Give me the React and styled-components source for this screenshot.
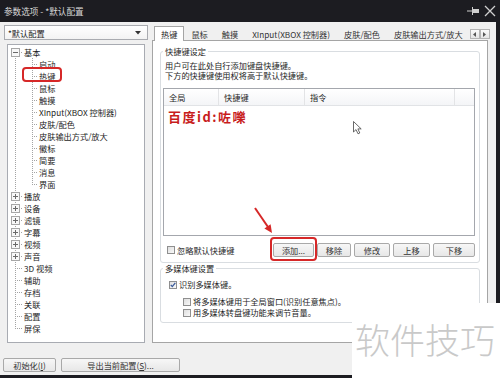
import React from "react";
import styled, { createGlobalStyle } from "styled-components";

const FONT = `"Noto Sans CJK SC", "Noto Sans", sans-serif`;
const DOT = "#a4a4a4";

const GlobalStyle = createGlobalStyle`
  html, body { margin: 0; padding: 0; background: #1c1c21; }
  * { box-sizing: border-box; }
`;

const Screen = styled.div`
  position: relative;
  width: 500px;
  height: 378px;
  overflow: hidden;
  background: #1c1c21;
  display: flex;
  flex-direction: column;
  font-family: ${FONT};
  font-size: 8.2px;
  color: #1e1e1e;
`;

const TitleBar = styled.div`
  height: 22px;
  flex: none;
  display: flex;
  align-items: center;
  padding: 0 4px;
  color: #d8d8d8;
  font-size: 8.6px;
`;

const TitleText = styled.span`
  flex: 1;
`;

const TitleIcons = styled.div`
  display: flex;
  align-items: center;
  gap: 4px;
`;

const Window = styled.div`
  width: 496px;
  height: 353px;
  background: #f0f0f0;
  display: flex;
  flex-direction: column;
`;

const Main = styled.div`
  height: 321px;
  display: flex;
  padding: 3px 0 0 4px;
`;

const LeftCol = styled.div`
  width: 144px;
  display: flex;
  flex-direction: column;
`;

const Combo = styled.div`
  height: 15px;
  flex: none;
  border: 1px solid #a9abb0;
  background: linear-gradient(#ffffff, #f3f3f3);
  display: flex;
  align-items: center;
  justify-content: space-between;
  padding: 0 6px 0 3px;
`;

const Tree = styled.div`
  position: relative;
  flex: 1;
  margin: 4px 3px 0 3px;
  background: #fff;
  border: 1px solid #a8abb2;
  padding-top: 1px;
`;

const Row = styled.div`
  height: 12px;
  display: flex;
  white-space: nowrap;
`;

const vLine = (c, pos, size) =>
  `repeating-linear-gradient(to bottom, ${DOT} 0 1px, transparent 1px 2px) ${c}px ${pos} / 1px ${size} no-repeat`;
const hLine = (c) =>
  `repeating-linear-gradient(to right, ${DOT} 0 1px, transparent 1px 2px) ${c}px 6px / calc(100% - ${c}px) 1px no-repeat`;

const gutterLines = ({ $c, $v, $h }) => {
  const out = [];
  if ($v === "full") out.push(vLine($c, "0", "100%"));
  if ($v === "top") out.push(vLine($c, "0", "7px"));
  if ($v === "bottom") out.push(vLine($c, "6px", "6px"));
  if ($h) out.push(hLine($c));
  return out.length ? out.join(", ") : "none";
};

const Gutter = styled.span`
  flex: none;
  width: ${(p) => p.$w}px;
  display: flex;
  justify-content: center;
  padding-top: 2px;
  background: ${gutterLines};
`;

const Label = styled.span`
  margin-left: 1px;
  line-height: 12px;
`;

const Ring = styled.div`
  position: absolute;
  left: ${(p) => p.$x}px;
  top: ${(p) => p.$y}px;
  width: ${(p) => p.$w}px;
  height: ${(p) => p.$h}px;
  border: 2px solid #d62828;
  border-radius: 4px;
`;

const RightCol = styled.div`
  width: 336px;
  margin-left: 4px;
  display: flex;
  flex-direction: column;
`;

const TabStrip = styled.div`
  height: 15px;
  flex: none;
  display: flex;
  align-items: flex-end;
  padding-left: 2px;
  position: relative;
  z-index: 1;
`;

const Tab = styled.div`
  height: ${(p) => (p.$active ? 15 : 13)}px;
  margin-bottom: ${(p) => (p.$active ? -1 : 0)}px;
  padding: 0 6px;
  display: flex;
  align-items: center;
  white-space: nowrap;
  background: ${(p) => (p.$active ? "#fff" : "transparent")};
  border: 1px solid ${(p) => (p.$active ? "#a5a5a5" : "transparent")};
  border-bottom: none;
  color: ${(p) => (p.$active ? "#1e1e1e" : "#333")};
`;

const ScrollBtns = styled.div`
  display: flex;
  margin: 0 2px 1px auto;
`;

const ScrollBtn = styled.div`
  width: 10px;
  height: 10px;
  border: 1px solid #b4b4b4;
  background: linear-gradient(#fafafa, #e4e4e4);
  display: flex;
  align-items: center;
  justify-content: center;
`;

const Panel = styled.div`
  position: relative;
  flex: 1;
  background: #fff;
  border: 1px solid #a5a5a5;
  padding: 5px 7px 0 7px;
  display: flex;
  flex-direction: column;
`;

const Group = styled.fieldset`
  margin: 0;
  min-width: 0;
  border: 1px solid #d9dde1;
  border-radius: 3px;
  padding: ${(p) => p.$pad};
`;

const Legend = styled.legend`
  padding: 0 2px;
  line-height: 11px;
  color: #1e1e1e;
`;

const Desc = styled.div`
  margin-left: 2px;
  line-height: 10px;
`;

const List = styled.div`
  position: relative;
  margin-top: 8px;
  height: 148px;
  border: 1px solid #a4a7ad;
  background: #fff;
`;

const ListHead = styled.div`
  display: flex;
  height: 17px;
  background: linear-gradient(#ffffff, #f4f5f7);
  border-bottom: 1px solid #e1e3e6;
`;

const HeadCell = styled.div`
  width: ${(p) => (p.$w ? `${p.$w}px` : "auto")};
  flex: ${(p) => (p.$w ? "none" : "1")};
  padding-left: 5px;
  display: flex;
  align-items: center;
  border-right: ${(p) => (p.$w ? "1px solid #e3e4e6" : "none")};
`;

const Stamp = styled.div`
  padding: 4px 0 0 4px;
  font-size: 13px;
  line-height: 14px;
  font-weight: 700;
  letter-spacing: 1.5px;
  color: #c81d1d;
`;

const Cursor = styled.svg`
  position: absolute;
  left: 189px;
  top: 32px;
`;

const ButtonRow = styled.div`
  display: flex;
  align-items: center;
  margin-top: 7px;
  gap: 3px;
`;

const CheckRow = styled.label`
  display: flex;
  align-items: center;
  gap: 2px;
  line-height: 11px;
  margin-left: ${(p) => p.$indent}px;
  margin-top: ${(p) => p.$top || 0}px;
  flex: ${(p) => (p.$grow ? 1 : "none")};
`;

const Button = styled.button`
  width: ${(p) => p.$w}px;
  height: 14px;
  padding: 0;
  border: 1px solid #a9a9a9;
  border-radius: 2px;
  background: linear-gradient(#f7f7f7, #e7e7e7);
  font-family: ${FONT};
  font-size: 8.2px;
  line-height: 12px;
  color: #333;
`;

const Footer = styled.div`
  display: flex;
  gap: 5px;
  padding: 15px 0 0 3px;
`;

const Arrow = styled.svg`
  position: absolute;
  left: 100px;
  top: 165px;
`;

const Watermark = styled.div`
  position: absolute;
  left: 352px;
  top: 303px;
  right: 0;
  bottom: 0;
  background: #fff;
  padding: 17px 0 0 3px;
  font-size: 35px;
  line-height: 38px;
  font-weight: 300;
  color: #c9c9c9;
  white-space: nowrap;
`;

const Expander = ({ open }) => (
  <svg width="9" height="9" viewBox="0 0 9 9">
    <rect x="0.5" y="0.5" width="8" height="8" fill="#f8f8f8" stroke="#a6a6a6" />
    <path d={open ? "M2 4.5h5" : "M2 4.5h5M4.5 2v5"} stroke="#6a6a6a" />
  </svg>
);

const Check = ({ checked }) => (
  <svg width="8" height="8" viewBox="0 0 8 8">
    <defs>
      <linearGradient id="cbg" x1="0" y1="0" x2="1" y2="1">
        <stop offset="0" stopColor="#dcdcdc" />
        <stop offset="1" stopColor="#fbfbfb" />
      </linearGradient>
    </defs>
    <rect x="0.5" y="0.5" width="7" height="7" fill="url(#cbg)" stroke="#8f8f8f" />
    {checked && <path d="M1.8 3.9 L3.3 5.6 L6.3 1.8" fill="none" stroke="#3a5a9a" strokeWidth="1.3" />}
  </svg>
);

const basicChildren = [
  "启动",
  "热键",
  "鼠标",
  "触摸",
  "XInput(XBOX 控制器)",
  "皮肤/配色",
  "皮肤输出方式/放大",
  "徽标",
  "简要",
  "消息",
  "界面",
];
const closedGroups = ["播放", "设备", "滤镜", "字幕", "视频", "声音"];
const leaves = ["3D 视频", "辅助", "存档", "关联", "配置", "屏保"];
const tabs = ["热键", "鼠标", "触摸", "XInput(XBOX 控制器)", "皮肤/配色", "皮肤输出方式/放大"];

export default function App() {
  return (
    <Screen>
      <GlobalStyle />
      <TitleBar>
        <TitleText>参数选项 - *默认配置</TitleText>
        <TitleIcons>
          <svg width="13" height="10" viewBox="0 0 13 10">
            <path d="M0 5h5" stroke="#cfcfcf" />
            <path d="M5.5 1v8" stroke="#cfcfcf" />
            <rect x="6" y="3" width="6" height="4" fill="#cfcfcf" />
          </svg>
          <svg width="12" height="12" viewBox="0 0 12 12">
            <path d="M1 1L11 11M11 1L1 11" stroke="#d0d0d0" strokeWidth="1.3" />
          </svg>
        </TitleIcons>
      </TitleBar>
      <Window>
        <Main>
          <LeftCol>
            <Combo>
              <span>*默认配置</span>
              <svg width="6" height="4" viewBox="0 0 6 4">
                <path d="M0 0h6L3 3.5z" fill="#333" />
              </svg>
            </Combo>
            <Tree>
              <Row>
                <Gutter $w={15} $c={7} $v="bottom" $h>
                  <Expander open />
                </Gutter>
                <Label>基本</Label>
              </Row>
              {basicChildren.map((t, i) => (
                <Row key={t}>
                  <Gutter $w={15} $c={7} $v="full" />
                  <Gutter $w={15} $c={9} $v={i === basicChildren.length - 1 ? "top" : "full"} $h />
                  <Label>{t}</Label>
                </Row>
              ))}
              {closedGroups.map((t) => (
                <Row key={t}>
                  <Gutter $w={15} $c={7} $v="full" $h>
                    <Expander />
                  </Gutter>
                  <Label>{t}</Label>
                </Row>
              ))}
              {leaves.map((t, i) => (
                <Row key={t}>
                  <Gutter $w={15} $c={7} $v={i === leaves.length - 1 ? "top" : "full"} $h />
                  <Label>{t}</Label>
                </Row>
              ))}
              <Ring $x={14} $y={22} $w={40} $h={15} />
            </Tree>
          </LeftCol>
          <RightCol>
            <TabStrip>
              {tabs.map((t, i) => (
                <Tab key={t} $active={i === 0}>
                  {t}
                </Tab>
              ))}
              <ScrollBtns>
                <ScrollBtn>
                  <svg width="3" height="5" viewBox="0 0 3 5">
                    <path d="M3 0v5L0 2.5z" fill="#555" />
                  </svg>
                </ScrollBtn>
                <ScrollBtn>
                  <svg width="3" height="5" viewBox="0 0 3 5">
                    <path d="M0 0v5L3 2.5z" fill="#555" />
                  </svg>
                </ScrollBtn>
              </ScrollBtns>
            </TabStrip>
            <Panel>
              <Group $pad="3px 4px 5px 2px">
                <Legend>快捷键设定</Legend>
                <Desc>
                  用户可在此处自行添加键盘快捷键。
                  <br />
                  下方的快捷键使用权将高于默认快捷键。
                </Desc>
                <List>
                  <ListHead>
                    <HeadCell $w={55}>全局</HeadCell>
                    <HeadCell $w={86}>快捷键</HeadCell>
                    <HeadCell $w={150}>指令</HeadCell>
                    <HeadCell />
                  </ListHead>
                  <Stamp>百度id:咗嚛</Stamp>
                  <Cursor width="9" height="14" viewBox="0 0 9 14">
                    <path d="M0.5 0.5V11L3 8.6L5 12.8L6.8 12L4.9 7.9H8.2Z" fill="#fff" stroke="#444" strokeWidth="0.8" />
                  </Cursor>
                </List>
                <ButtonRow>
                  <CheckRow $indent={4} $grow>
                    <Check />
                    忽略默认快捷键
                  </CheckRow>
                  <Button $w={41}>添加...</Button>
                  <Button $w={34}>移除</Button>
                  <Button $w={36}>修改</Button>
                  <Button $w={37}>上移</Button>
                  <Button $w={42}>下移</Button>
                </ButtonRow>
              </Group>
              <Group $pad="5px 4px 4px 2px">
                <Legend>多媒体键设置</Legend>
                <CheckRow $indent={6}>
                  <Check checked />
                  识别多媒体键。
                </CheckRow>
                <CheckRow $indent={20} $top={6}>
                  <Check />
                  将多媒体键用于全局窗口(识别任意焦点)。
                </CheckRow>
                <CheckRow $indent={20}>
                  <Check />
                  用多媒体转盘键功能来调节音量。
                </CheckRow>
              </Group>
              <Ring $x={117} $y={196} $w={47} $h={24} />
              <Arrow width="22" height="30" viewBox="0 0 22 30">
                <path d="M2 2L15.5 21.8" stroke="#d62828" strokeWidth="2" />
                <path d="M19 27L11.4 22.6L17.6 18.2Z" fill="#d62828" />
              </Arrow>
            </Panel>
          </RightCol>
        </Main>
        <Footer>
          <Button $w={53}>
            初始化(<u>I</u>)
          </Button>
          <Button $w={119}>
            导出当前配置(<u>S</u>)...
          </Button>
        </Footer>
      </Window>
      <Watermark>软件技巧</Watermark>
    </Screen>
  );
}
